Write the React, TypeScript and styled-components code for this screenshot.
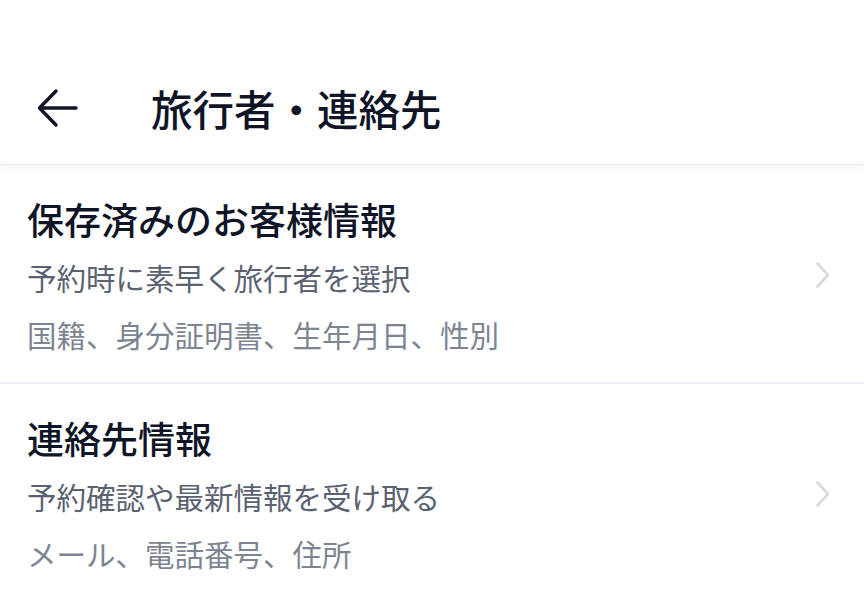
import React from "react";
import styled, { createGlobalStyle } from "styled-components";

const GlobalStyle = createGlobalStyle`
  html, body {
    margin: 0;
    padding: 0;
    background: #ffffff;
  }
  body {
    font-family: "Noto Sans CJK JP", "Noto Sans", sans-serif;
    -webkit-font-smoothing: antialiased;
  }
`;

const Page = styled.div`
  width: 864px;
  min-height: 603px;
  background: #ffffff;
  overflow: hidden;
`;

const Header = styled.header`
  height: 165px;
  box-sizing: border-box;
  padding-top: 52px;
  display: flex;
  align-items: center;
  border-bottom: 1px solid #ececec;
  box-shadow: 0 3px 6px rgba(0, 0, 0, 0.035);
  position: relative;
  z-index: 1;
`;

const BackButton = styled.button`
  width: 44px;
  height: 44px;
  margin-left: 36px;
  padding: 0;
  border: none;
  background: transparent;
  display: flex;
  align-items: center;
  justify-content: center;
  cursor: pointer;
`;

const HeaderTitle = styled.h1`
  margin: 0 0 0 71px;
  font-size: 41.5px;
  line-height: 56px;
  font-weight: 500;
  color: #0f1526;
`;

const Section = styled.section<{ $last?: boolean }>`
  display: flex;
  align-items: center;
  padding: 29px 33px 26px 27px;
  border-bottom: ${(p) => (p.$last ? "none" : "2px solid #eef0f3")};
`;

const Texts = styled.div`
  flex: 1;
  display: flex;
  flex-direction: column;
`;

const Title = styled.div`
  font-size: 37px;
  line-height: 50px;
  font-weight: 500;
  color: #0f1526;
`;

const Sub = styled.div<{ $tone: "mid" | "light" }>`
  font-size: 29.5px;
  line-height: 44px;
  margin-top: ${(p) => (p.$tone === "mid" ? "11px" : "13px")};
  color: ${(p) => (p.$tone === "mid" ? "#5a6271" : "#7d8592")};
  font-weight: 400;
`;

const Chevron = styled.svg`
  width: 16px;
  height: 28px;
  flex: none;
`;

const ArrowLeft = () => (
  <svg width="44" height="44" viewBox="0 0 44 44" fill="none">
    <path
      d="M40 22H4M20 5L3.5 22L20 39"
      stroke="#0f1526"
      strokeWidth="3.4"
      strokeLinecap="round"
      strokeLinejoin="round"
    />
  </svg>
);

const ChevronRight = () => (
  <Chevron viewBox="0 0 16 28" fill="none">
    <path
      d="M2.5 2.5L13 14L2.5 25.5"
      stroke="#dadada"
      strokeWidth="2.6"
      strokeLinecap="round"
      strokeLinejoin="round"
    />
  </Chevron>
);

const items = [
  {
    title: "保存済みのお客様情報",
    sub: "予約時に素早く旅行者を選択",
    detail: "国籍、身分証明書、生年月日、性別",
  },
  {
    title: "連絡先情報",
    sub: "予約確認や最新情報を受け取る",
    detail: "メール、電話番号、住所",
  },
];

export default function App() {
  return (
    <Page>
      <GlobalStyle />
      <Header>
        <BackButton aria-label="戻る">
          <ArrowLeft />
        </BackButton>
        <HeaderTitle>旅行者・連絡先</HeaderTitle>
      </Header>
      {items.map((it, i) => (
        <Section key={it.title} $last={i === items.length - 1}>
          <Texts>
            <Title>{it.title}</Title>
            <Sub $tone="mid">{it.sub}</Sub>
            <Sub $tone="light">{it.detail}</Sub>
          </Texts>
          <ChevronRight />
        </Section>
      ))}
    </Page>
  );
}
